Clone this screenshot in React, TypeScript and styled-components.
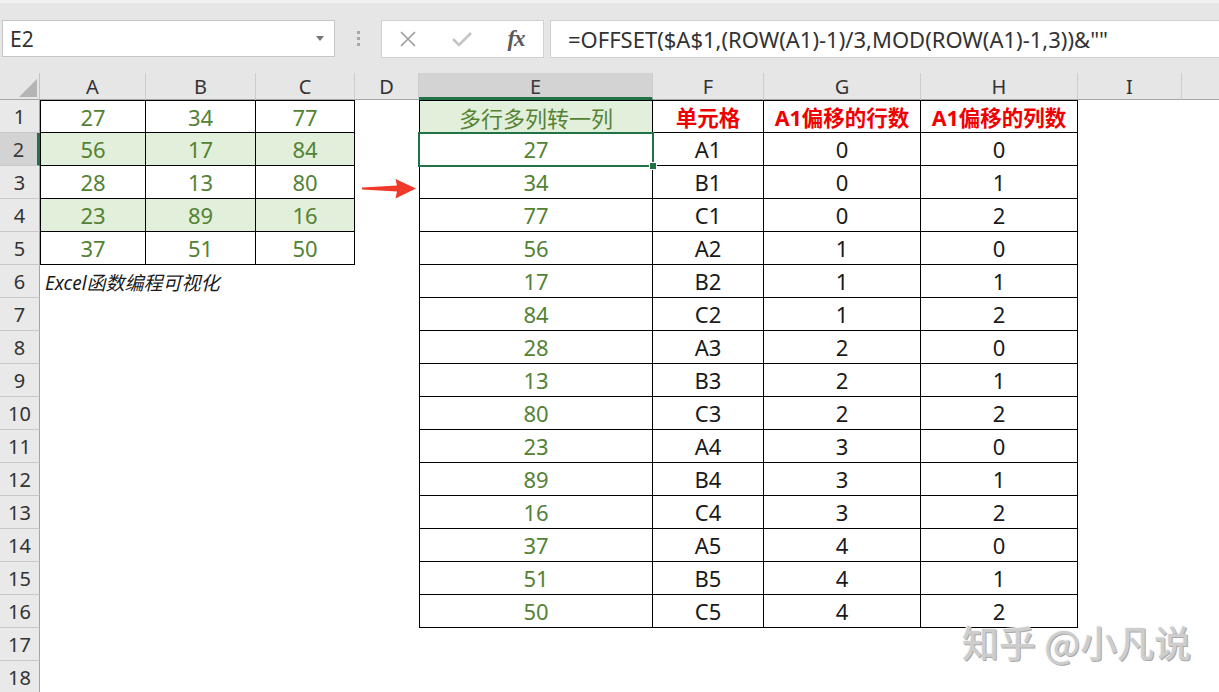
import React from 'react';
import styled, { createGlobalStyle } from 'styled-components';

const GlobalStyle = createGlobalStyle`
  html, body {
    margin: 0;
    padding: 0;
    background: #ffffff;
    overflow: hidden;
  }
  body {
    font-family: "Noto Sans", "Noto Sans CJK SC", sans-serif;
    color: #222;
  }
`;

// column letters and pixel widths, taken from the sheet
const columns = [
  { letter: 'A', width: 106 },
  { letter: 'B', width: 110 },
  { letter: 'C', width: 99 },
  { letter: 'D', width: 64 },
  { letter: 'E', width: 234 },
  { letter: 'F', width: 111 },
  { letter: 'G', width: 157 },
  { letter: 'H', width: 157 },
  { letter: 'I', width: 104 },
  { letter: '', width: 120 }, // J is scrolled off the right edge
];

const sourceData = [
  [27, 34, 77],
  [56, 17, 84],
  [28, 13, 80],
  [23, 89, 16],
  [37, 51, 50],
];

const ROW_COUNT = 18;
const gridColumns = `40px ${columns.map((c) => `${c.width}px`).join(' ')}`;

type Tone = 'green' | 'red' | 'dark';

interface CellSpec {
  text?: string;
  bordered?: boolean;
  top?: boolean;
  left?: boolean;
  fill?: boolean;
  tone?: Tone;
  bold?: boolean;
  italic?: boolean;
  overflow?: boolean;
  selected?: boolean;
}

const toneColor: Record<Tone, string> = {
  green: '#548235',
  red: '#f00000',
  dark: '#1a1a1a',
};

// work out what sits in a given cell (row is 1-based, col is 0-based)
const getCell = (row: number, col: number): CellSpec => {
  if (row <= 5 && col <= 2) {
    return {
      text: String(sourceData[row - 1][col]),
      bordered: true,
      top: row === 1,
      left: col === 0,
      fill: row === 2 || row === 4,
      tone: 'green',
    };
  }
  if (row === 6 && col === 0) {
    return { text: 'Excel函数编程可视化', italic: true, overflow: true, tone: 'dark' };
  }
  if (row <= 16 && col >= 4 && col <= 7) {
    const base = { bordered: true, top: row === 1, left: col === 4 };
    if (row === 1) {
      if (col === 4) return { ...base, text: '多行多列转一列', fill: true, tone: 'green' };
      const heads = ['单元格', 'A1偏移的行数', 'A1偏移的列数'];
      return { ...base, text: heads[col - 5], tone: 'red', bold: true };
    }
    const i = row - 2;
    const r = Math.floor(i / 3);
    const c = i % 3;
    if (col === 4) {
      return { ...base, text: String(sourceData[r][c]), tone: 'green', selected: row === 2 };
    }
    if (col === 5) return { ...base, text: `${'ABC'[c]}${r + 1}`, tone: 'dark' };
    if (col === 6) return { ...base, text: String(r), tone: 'dark' };
    return { ...base, text: String(c), tone: 'dark' };
  }
  return {};
};

const App: React.FC = () => {
  return (
    <>
      <GlobalStyle />
      <Page>
        <Toolbar>
          <NameBox>
            <NameText>E2</NameText>
            <DropArrow />
          </NameBox>
          <Grip>
            <span />
            <span />
            <span />
          </Grip>
          <ButtonBox>
            <IconSlot>
              <svg width="18" height="18" viewBox="0 0 18 18">
                <path d="M2 2 L16 16 M16 2 L2 16" stroke="#9c9c9c" strokeWidth="1.6" fill="none" />
              </svg>
            </IconSlot>
            <IconSlot>
              <svg width="22" height="18" viewBox="0 0 22 18">
                <path d="M2 9 L8 15 L20 3" stroke="#c4c4c4" strokeWidth="2.6" fill="none" />
              </svg>
            </IconSlot>
            <IconSlot>
              <FxText>fx</FxText>
            </IconSlot>
          </ButtonBox>
          <FormulaBox>=OFFSET($A$1,(ROW(A1)-1)/3,MOD(ROW(A1)-1,3))&amp;""</FormulaBox>
        </Toolbar>

        <SheetArea>
          <Sheet>
            <Corner>
              <svg width="36" height="24" viewBox="0 0 36 24">
                <polygon points="34,4 34,22 16,22" fill="#b5b5b5" />
              </svg>
            </Corner>
            {columns.map((c, idx) => (
              <ColHeader key={idx} $active={idx === 4}>
                {c.letter}
              </ColHeader>
            ))}
            {Array.from({ length: ROW_COUNT }, (_, r) => {
              const row = r + 1;
              return (
                <React.Fragment key={row}>
                  <RowHeader $active={row === 2}>{row}</RowHeader>
                  {columns.map((_, col) => {
                    const cell = getCell(row, col);
                    return (
                      <Cell
                        key={col}
                        $bordered={cell.bordered}
                        $top={cell.top}
                        $left={cell.left}
                        $fill={cell.fill}
                        $tone={cell.tone}
                        $bold={cell.bold}
                        $italic={cell.italic}
                        $overflow={cell.overflow}
                        $selected={cell.selected}
                      >
                        {cell.text}
                      </Cell>
                    );
                  })}
                </React.Fragment>
              );
            })}
          </Sheet>

          <Arrow width="60" height="26" viewBox="0 0 60 26">
            <polygon
              points="2,11.5 37,9.5 35.5,3 56,12.5 35.5,22.5 37,15.5 2,13.5"
              fill="#f0392b"
            />
          </Arrow>

          <Watermark>知乎 @小凡说</Watermark>
        </SheetArea>
      </Page>
    </>
  );
};

export default App;

const Page = styled.div`
  width: 1219px;
  height: 692px;
  overflow: hidden;
  background: #ffffff;
`;

const Toolbar = styled.div`
  height: 73px;
  box-sizing: border-box;
  display: flex;
  align-items: flex-start;
  padding: 20px 0 0 2px;
  background: #e6e6e6;
  border-top: 3px solid #f1f1f1;
`;

const NameBox = styled.div`
  width: 333px;
  height: 37px;
  box-sizing: border-box;
  margin-top: -3px;
  display: flex;
  align-items: center;
  justify-content: space-between;
  padding: 0 10px 0 7px;
  background: #ffffff;
  border: 1px solid #c6c6c6;
`;

const NameText = styled.span`
  font-size: 21px;
  color: #333;
`;

const DropArrow = styled.span`
  width: 0;
  height: 0;
  border-left: 4px solid transparent;
  border-right: 4px solid transparent;
  border-top: 5px solid #777;
`;

const Grip = styled.div`
  width: 46px;
  height: 37px;
  margin-top: -3px;
  display: flex;
  flex-direction: column;
  align-items: center;
  justify-content: center;
  gap: 3px;

  span {
    width: 3px;
    height: 3px;
    background: #a8a8a8;
  }
`;

const ButtonBox = styled.div`
  width: 163px;
  height: 38px;
  box-sizing: border-box;
  margin-top: -3px;
  display: flex;
  align-items: center;
  gap: 20px;
  padding-left: 9px;
  background: #ffffff;
  border: 1px solid #d0d0d0;
`;

const IconSlot = styled.div`
  width: 34px;
  display: flex;
  align-items: center;
  justify-content: center;
`;

const FxText = styled.span`
  font-family: "Liberation Serif", "DejaVu Serif", serif;
  font-style: italic;
  font-weight: bold;
  font-size: 23px;
  color: #5a5a5a;
  letter-spacing: -1px;
`;

const FormulaBox = styled.div`
  flex: 1;
  height: 38px;
  box-sizing: border-box;
  margin-top: -3px;
  margin-left: 6px;
  display: flex;
  align-items: center;
  padding-left: 17px;
  background: #ffffff;
  border: 1px solid #d0d0d0;
  border-right: none;
  font-size: 22px;
  color: #333;
  white-space: nowrap;
`;

const SheetArea = styled.div`
  position: relative;
`;

const Sheet = styled.div`
  display: grid;
  grid-template-columns: ${gridColumns};
  grid-template-rows: 27px repeat(${ROW_COUNT}, 33px);
  background: #ffffff;
`;

const Corner = styled.div`
  background: #e6e6e6;
  border-right: 1px solid #c4c4c4;
  border-bottom: 1px solid #a6a6a6;
  display: flex;
  align-items: flex-end;
  justify-content: flex-end;
`;

const ColHeader = styled.div<{ $active?: boolean }>`
  box-sizing: border-box;
  display: flex;
  align-items: center;
  justify-content: center;
  font-size: 20px;
  color: ${(p) => (p.$active ? '#3a3a3a' : '#333')};
  background: ${(p) => (p.$active ? '#d3d3d3' : '#e6e6e6')};
  border-right: 1px solid #cdcdcd;
  border-bottom: ${(p) => (p.$active ? '3px solid #217346' : '1px solid #a6a6a6')};
  padding-top: ${(p) => (p.$active ? '2px' : '0')};
`;

const RowHeader = styled.div<{ $active?: boolean }>`
  box-sizing: border-box;
  display: flex;
  align-items: center;
  justify-content: center;
  font-size: 20px;
  color: ${(p) => (p.$active ? '#3a3a3a' : '#333')};
  background: ${(p) => (p.$active ? '#d3d3d3' : '#e9e9e9')};
  border-bottom: 1px solid #c8c8c8;
  border-right: ${(p) => (p.$active ? '3px solid #217346' : '1px solid #a6a6a6')};
`;

const Cell = styled.div<{
  $bordered?: boolean;
  $top?: boolean;
  $left?: boolean;
  $fill?: boolean;
  $tone?: Tone;
  $bold?: boolean;
  $italic?: boolean;
  $overflow?: boolean;
  $selected?: boolean;
}>`
  position: relative;
  box-sizing: border-box;
  display: flex;
  align-items: center;
  justify-content: ${(p) => (p.$overflow ? 'flex-start' : 'center')};
  padding-left: ${(p) => (p.$overflow ? '5px' : '0')};
  white-space: nowrap;
  overflow: visible;
  z-index: ${(p) => (p.$overflow || p.$selected ? 2 : 0)};
  font-size: ${(p) => (p.$bold ? '21.5px' : p.$italic ? '19px' : '22px')};
  font-weight: ${(p) => (p.$bold ? 700 : 400)};
  font-style: ${(p) => (p.$italic ? 'italic' : 'normal')};
  color: ${(p) => (p.$tone ? toneColor[p.$tone] : '#222')};
  background: ${(p) => (p.$fill ? '#e2efda' : 'transparent')};
  border-right: ${(p) => (p.$bordered ? '1px solid #000' : 'none')};
  border-bottom: ${(p) => (p.$bordered ? '1px solid #000' : 'none')};
  border-top: ${(p) => (p.$top ? '1px solid #000' : 'none')};
  border-left: ${(p) => (p.$left ? '1px solid #000' : 'none')};
  outline: ${(p) => (p.$selected ? '2px solid #217346' : 'none')};
  outline-offset: -1px;

  &::after {
    content: '';
    display: ${(p) => (p.$selected ? 'block' : 'none')};
    position: absolute;
    right: -5px;
    bottom: -5px;
    width: 6px;
    height: 6px;
    background: #217346;
    border: 1px solid #ffffff;
  }
`;

const Arrow = styled.svg`
  position: absolute;
  left: 360px;
  top: 103px;
`;

const Watermark = styled.div`
  position: absolute;
  left: 962px;
  top: 542px;
  font-family: "Noto Sans CJK SC", sans-serif;
  font-size: 37px;
  font-weight: 500;
  color: #cdcdcd;
  text-shadow: 1px 1px 0 #a9a9a9, -1px -1px 0 #f6f6f6;
  white-space: nowrap;
  pointer-events: none;
`;
